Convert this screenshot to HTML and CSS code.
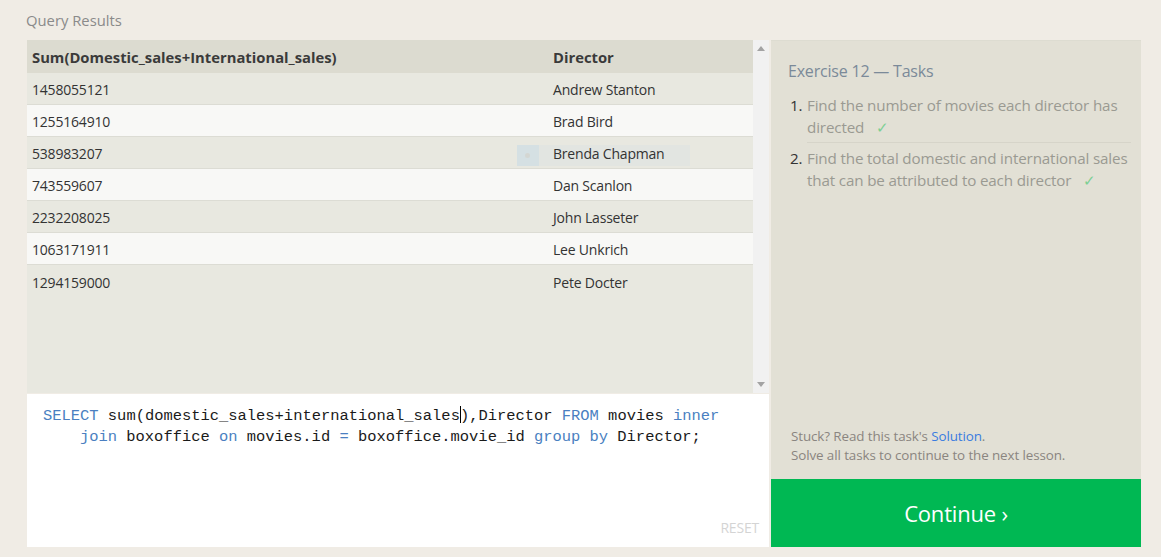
FILE: index.html
```html
<!DOCTYPE html>
<html>
<head>
<meta charset="utf-8">
<link rel="stylesheet" href="styles.css">
</head>
<body>
<div class="page">
  <div class="title">Query Results</div>
  <div class="main">
    <div class="left">
      <div class="results">
        <div class="table">
          <div class="row head"><div class="c1">Sum(Domestic_sales+International_sales)</div><div class="c2">Director</div></div>
          <div class="row odd"><div class="c1">1458055121</div><div class="c2">Andrew Stanton</div></div>
          <div class="row even"><div class="c1">1255164910</div><div class="c2">Brad Bird</div></div>
          <div class="row odd ghost-row"><div class="c1">538983207</div><div class="c2">Brenda Chapman</div><div class="ghost"><span class="gdot"></span></div></div>
          <div class="row even"><div class="c1">743559607</div><div class="c2">Dan Scanlon</div></div>
          <div class="row odd"><div class="c1">2232208025</div><div class="c2">John Lasseter</div></div>
          <div class="row even"><div class="c1">1063171911</div><div class="c2">Lee Unkrich</div></div>
          <div class="row odd"><div class="c1">1294159000</div><div class="c2">Pete Docter</div></div>
        </div>
        <div class="scrollbar">
          <svg class="arrow" width="8" height="5" viewBox="0 0 8 5"><path d="M0 5 L4 0 L8 5 Z" fill="#a3a3a3"/></svg>
          <svg class="arrow" width="8" height="5" viewBox="0 0 8 5"><path d="M0 0 L4 5 L8 0 Z" fill="#a3a3a3"/></svg>
        </div>
      </div>
      <div class="editor">
        <div class="code"><span class="kw">SELECT</span> sum(domestic_sales+international_sales<span class="cursor"></span>),Director <span class="kw">FROM</span> movies <span class="kw">inner</span><br><span class="indent"></span><span class="kw">join</span> boxoffice <span class="kw">on</span> movies.id <span class="kw">=</span> boxoffice.movie_id <span class="kw">group</span> <span class="kw">by</span> Director;</div>
        <div class="reset">RESET</div>
      </div>
    </div>
    <div class="right">
      <div class="tasks">
        <div class="tasks-title">Exercise 12 — Tasks</div>
        <ol class="task-list">
          <li class="task"><span class="num">1.</span><span class="ttext done">Find the number of movies each director has directed</span></li>
          <li class="task"><span class="num">2.</span><span class="ttext done">Find the total domestic and international sales that can be attributed to each director</span></li>
        </ol>
        <div class="spacer"></div>
        <div class="hint">Stuck? Read this task's <span class="link">Solution</span>.<br>Solve all tasks to continue to the next lesson.</div>
      </div>
      <div class="continue">Continue ›</div>
    </div>
  </div>
</div>
</body>
</html>
```
FILE: styles.css
```css
* { box-sizing: border-box; }
html, body { margin: 0; padding: 0; }
body {
  background: #f0ece5;
  font-family: "Segoe UI", "Open Sans", "Noto Sans", sans-serif;
  width: 1161px;
  height: 557px;
  overflow: hidden;
}
.page { padding: 0 20px 10px 27px; }
.title {
  height: 40px;
  padding-top: 10px;
  margin-left: -1px;
  font-size: 14.8px;
  color: #8a8a8a;
  line-height: 20px;
}
.main { display: flex; height: 507px; gap: 2px; }
.left { width: 742px; display: flex; flex-direction: column; gap: 1px; }
.results { height: 353px; display: flex; background: #e8e8e0; }
.table { flex: 1; display: flex; flex-direction: column; }
.row {
  display: flex;
  height: 32px;
  align-items: center;
  padding-top: 2px;
  font-size: 14px;
  color: #333;
  border-bottom: 1px solid #dcdcd4;
  letter-spacing: -0.2px;
}
.row.head {
  height: 33px;
  padding-top: 1px;
  background: #dcdbd0;
  font-weight: 700;
  font-size: 14.8px;
  letter-spacing: 0;
  color: #3a3a3a;
  border-bottom: none;
}
.row.odd { background: #e8e8e0; }
.row.even { background: #f8f8f6; }
.row:last-child { border-bottom: none; }
.c1 { width: 521px; padding-left: 5px; }
.c2 { padding-left: 5px; position: relative; z-index: 1; }
.ghost-row { position: relative; }
.ghost {
  position: absolute;
  left: 490px;
  top: 8px;
  width: 173px;
  height: 21px;
  background: rgba(220, 226, 226, 0.45);
}
.gdot {
  position: absolute;
  left: 0;
  top: 0;
  width: 22px;
  height: 21px;
  background: rgba(205, 220, 228, 0.6);
}
.gdot::after {
  content: "";
  position: absolute;
  left: 8px; top: 8px;
  width: 5px; height: 5px;
  border-radius: 50%;
  background: #d4d6d2;
}
.scrollbar {
  width: 16px;
  background: #f1f1f1;
  display: flex;
  flex-direction: column;
  justify-content: space-between;
  align-items: center;
  padding: 6px 0 6px;
}
.arrow { display: block; }
.editor {
  height: 153px;
  background: #fff;
  position: relative;
  padding: 12px 16px 0 16px;
}
.code {
  font-family: "Liberation Mono", "DejaVu Sans Mono", monospace;
  font-size: 15.45px;
  line-height: 21px;
  color: #1a1a1a;
  white-space: nowrap;
}
.kw { color: #4a7fc1; }
.indent { display: inline-block; width: 37px; }
.cursor {
  display: inline-block;
  width: 1px;
  height: 17px;
  background: #000;
  vertical-align: -3px;
  margin-right: -1px;
}
.reset {
  position: absolute;
  right: 10px;
  bottom: 10px;
  font-size: 14px;
  color: #d4d4d4;
  letter-spacing: -0.2px;
}
.right { width: 370px; display: flex; flex-direction: column; }
.tasks {
  height: 439px;
  background: #e2e0d5;
  border-top: 1px solid #dddcd1;
  padding: 18px 10px 14px 17px;
  display: flex;
  flex-direction: column;
}
.tasks-title {
  font-size: 16px;
  color: #7b8a99;
  line-height: 24px;
  letter-spacing: -0.2px;
}
.task-list { list-style: none; margin: 11px 0 0 0; padding: 0; }
.task {
  display: flex;
  font-size: 15.2px;
  line-height: 22px;
  color: #9a9a92;
  letter-spacing: -0.15px;
}
.task + .task { margin-top: 4px; }
.task:first-child .ttext { border-bottom: 1px solid #d6d4c9; padding-bottom: 4px; }
.num { width: 19px; flex: none; color: #333; padding-left: 2px; }
.ttext { flex: 1; }
.done::after {
  content: "✓";
  display: inline-block;
  color: #7ccf93;
  margin-left: 12px;
  font-size: 15px;
}
.spacer { flex: 1; }
.hint {
  font-size: 13.4px;
  line-height: 19px;
  color: #8a8580;
  letter-spacing: -0.1px;
  margin-left: 3px;
}
.link { color: #3a7ce0; }
.continue {
  height: 68px;
  background: #00b853;
  color: #fff;
  font-size: 22px;
  display: flex;
  align-items: center;
  justify-content: center;
  letter-spacing: -0.2px;
}
```
